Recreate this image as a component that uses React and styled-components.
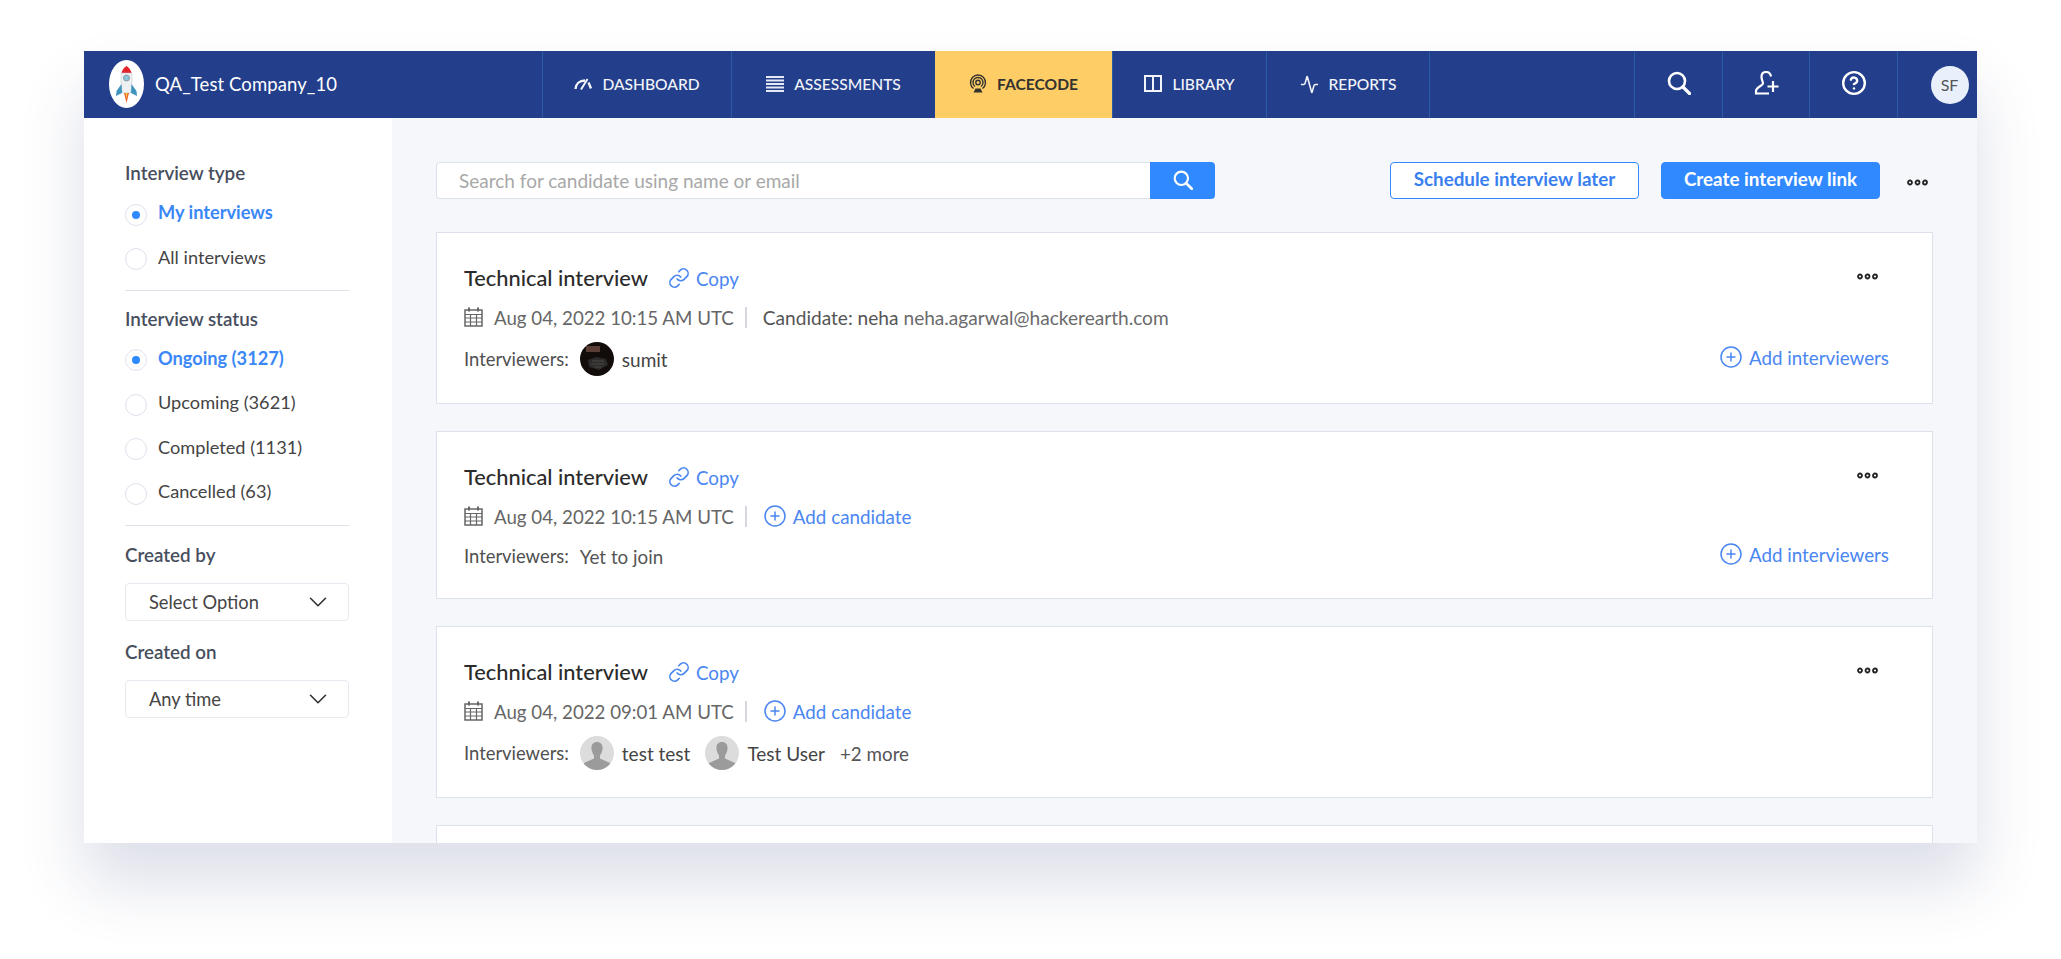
import React from "react";
import styled, { createGlobalStyle } from "styled-components";
import { Activity, ChevronDown, CircleHelp, CirclePlus, Link } from "lucide-react";

const GlobalStyle = createGlobalStyle`
  html, body {
    margin: 0;
    padding: 0;
    height: 959px;
    background: #fff;
    overflow: hidden;
    font-family: "Lato", "Liberation Sans", sans-serif;
  }
  * {
    box-sizing: border-box;
  }
`;

const Page = styled.div`
  padding: 51px 84px 0;
`;

const Frame = styled.div`
  width: 1893px;
  height: 792px;
  display: flex;
  flex-direction: column;
  overflow: hidden;
  box-shadow: 0 40px 60px rgba(50, 60, 120, 0.165);
`;

const Nav = styled.header`
  height: 67px;
  flex: none;
  display: flex;
  background: #233e8b;
  color: #fff;
`;

const Brand = styled.div`
  width: 458px;
  display: flex;
  align-items: center;
  gap: 11px;
  padding: 0 0 1px 25px;
  font-size: 18.5px;
  letter-spacing: 0.1px;
`;

const NavItem = styled.div`
  width: ${(p) => p.$width}px;
  display: flex;
  align-items: center;
  justify-content: center;
  gap: 10px;
  padding-bottom: 1px;
  border-left: ${(p) => (p.$active ? "none" : "1px solid #2a5ba6")};
  background: ${(p) => (p.$active ? "#ffcd66" : "transparent")};
  color: ${(p) => (p.$active ? "#33332f" : "#f2f4fa")};
  font-size: 15.6px;
  font-weight: ${(p) => (p.$active ? 700 : 500)};
`;

const NavSpacer = styled.div`
  flex: 1;
  border-left: 1px solid #2a5ba6;
`;

const NavIcon = styled.div`
  width: ${(p) => p.$width || 87.6}px;
  display: flex;
  align-items: center;
  justify-content: center;
  padding-bottom: 3px;
  border-left: 1px solid #2a5ba6;
`;

const Initials = styled.div`
  width: 38px;
  height: 38px;
  margin-left: 24px;
  margin-top: 3px;
  border-radius: 50%;
  background: #eaf0fb;
  color: #555;
  font-size: 16px;
  display: flex;
  align-items: center;
  justify-content: center;
`;

const Body = styled.div`
  flex: 1;
  min-height: 0;
  display: flex;
`;

const Sidebar = styled.aside`
  width: 308px;
  flex: none;
  background: #fff;
  padding: 43px 43px 0 41px;
`;

const Label = styled.div`
  height: 24px;
  line-height: 24px;
  font-size: 18.8px;
  font-weight: 600;
  color: #474e5d;
  margin-bottom: 16px;
`;

const RadioList = styled.div`
  display: flex;
  flex-direction: column;
  gap: 20.6px;
`;

const RadioRow = styled.div`
  height: 24px;
  padding-bottom: 2px;
  display: flex;
  align-items: center;
  gap: 11px;
  font-size: 18.2px;
  font-weight: ${(p) => (p.$checked ? 700 : 400)};
  color: ${(p) => (p.$checked ? "#3a87f7" : "#444")};
`;

const Radio = styled.span`
  width: 22px;
  height: 22px;
  margin-top: 5px;
  border-radius: 50%;
  border: 1px solid #dfe2ec;
  display: flex;
  align-items: center;
  justify-content: center;
  &::after {
    content: "";
    display: ${(p) => (p.$checked ? "block" : "none")};
    width: 8px;
    height: 8px;
    border-radius: 50%;
    background: #2f88ff;
  }
`;

const Divider = styled.div`
  height: 1px;
  background: #dfe2ea;
  margin: ${(p) => p.$above || 20}px 0 ${(p) => p.$below || 16}px;
`;

const Select = styled.div`
  height: 38px;
  border: 1px solid #e8e9f0;
  border-radius: 4px;
  padding: 0 15px 0 23px;
  margin-bottom: 19px;
  display: flex;
  align-items: center;
  justify-content: space-between;
  font-size: 18.3px;
  color: #444;
`;

const Main = styled.main`
  flex: 1;
  min-width: 0;
  background: #f6f7fb;
  padding: 44px 44px 0;
  overflow: hidden;
`;

const Toolbar = styled.div`
  height: 37px;
  display: flex;
  align-items: stretch;
  margin-bottom: 33px;
`;

const SearchInput = styled.input`
  width: 714px;
  padding: 0 22px;
  border: 1px solid #dde1ec;
  border-right: none;
  border-radius: 4px 0 0 4px;
  background: #fff;
  outline: none;
  font-family: inherit;
  font-size: 19px;
  &::placeholder {
    color: #a8a8a8;
    opacity: 1;
  }
`;

const SearchButton = styled.button`
  width: 65px;
  padding: 0 0 2px;
  border: none;
  border-radius: 0 4px 4px 0;
  background: #3089ff;
  display: flex;
  align-items: center;
  justify-content: center;
`;

const Button = styled.button`
  width: ${(p) => p.$width}px;
  margin-left: ${(p) => p.$left}px;
  padding: 0 0 4px;
  border: 1px solid #3089ff;
  border-radius: 4px;
  background: ${(p) => (p.$primary ? "#3089ff" : "#fff")};
  color: ${(p) => (p.$primary ? "#fff" : "#3a7ff0")};
  font-family: inherit;
  font-size: 18.8px;
  font-weight: 700;
`;

const ToolbarDots = styled.div`
  margin-left: 27px;
  padding-top: 17px;
`;

const CardList = styled.div`
  display: flex;
  flex-direction: column;
  gap: 27px;
`;

const Card = styled.article`
  flex: none;
  min-height: 60px;
  background: #fff;
  border: 1px solid #dde1ec;
  padding: 28px 43px 27px 27px;
`;

const Row = styled.div`
  height: ${(p) => p.$height || 34}px;
  margin-top: ${(p) => p.$top || 0}px;
  display: flex;
  align-items: center;
  font-size: 18.8px;
  color: #555;
`;

const Title = styled.h3`
  margin: 0 20px 0 0;
  padding-bottom: 2px;
  font-size: 21.8px;
  font-weight: 500;
  color: #2b2b2b;
`;

const ActionLink = styled.a`
  display: inline-flex;
  align-items: center;
  gap: ${(p) => p.$gap || 6}px;
  color: #4a86f2;
  font-size: 18.8px;
`;

const CardDots = styled.div`
  margin-left: auto;
  margin-right: 11px;
  padding-bottom: 4px;
`;

const DateText = styled.span`
  margin-left: 11px;
  padding-top: 1px;
  font-size: 18.7px;
  color: #666;
`;

const Separator = styled.span`
  width: 2px;
  height: 21px;
  margin: 0 16px 0 11px;
  background: #d5d8de;
`;

const Candidate = styled.span`
  padding-top: 1px;
  font-size: 19.1px;
  color: #555;
`;

const Email = styled.span`
  margin-left: 5px;
  color: #6b6b6b;
`;

const InterviewerLabel = styled.span`
  color: #4f4f4f;
  font-size: 18.4px;
  margin-right: 11px;
`;

const Person = styled.span`
  display: inline-flex;
  align-items: center;
  gap: 8px;
  margin-right: 15px;
  font-size: 19px;
  color: #444;
`;

const RightLink = styled.div`
  margin-left: auto;
`;

const Rocket = () => (
  <svg width="35" height="48" viewBox="0 0 35 48">
    <ellipse cx="17.5" cy="24" rx="17.5" ry="24" fill="#fff" />
    <path d="M17.5 6c-3 2-4.500 4.500-5 7h10c-.500-2.500-2-5-5-7z" fill="#e5232b" />
    <path d="M12.500 13c-1 6-.500 14 1 20h8c1.500-6 2-14 1-20z" fill="#eef1f4" stroke="#b9c2c9" strokeWidth=".5" />
    <circle cx="17.500" cy="18" r="3" fill="#8cc6dc" stroke="#8a99a3" />
    <path d="M12.500 24l-5 7-.500 5 6-3zM22.500 24l5 7 .500 5-6-3z" fill="#3f95bd" />
    <path d="M15 33h5l-2.500 10z" fill="#e8622a" />
    <path d="M16.500 33h2l-1 6z" fill="#f7c53f" />
  </svg>
);

const Gauge = () => (
  <svg width="18" height="12" viewBox="0 0 18 12" fill="none" stroke="#f2f4fa" strokeWidth="2.400">
    <path d="M1.500 11C1.800 6 5.500 2.500 11 2.500" />
    <path d="M7 11.500L13.500 1" strokeWidth="2" />
    <path d="M14.500 4.500L17 10.500" />
  </svg>
);

const Bars = () => (
  <svg width="18" height="16" viewBox="0 0 18 16" fill="#e6e9f4">
    <rect y="0" width="18" height="2" />
    <rect y="3.500" width="18" height="2" />
    <rect y="7" width="18" height="2" />
    <rect y="10.500" width="18" height="2" />
    <rect y="14" width="18" height="2" />
  </svg>
);

const FacecodeIcon = () => (
  <svg width="18" height="20" viewBox="0 0 18 20" fill="none" stroke="#33332f" strokeWidth="1.400">
    <path d="M4.500 14.500a7.500 7.500 0 1 1 9 0" />
    <path d="M6 12.500a5 5 0 1 1 6 0" />
    <circle cx="9" cy="8.500" r="2.200" />
    <path d="M6.500 14.500h5l2 4h-9z" fill="#33332f" stroke="none" />
  </svg>
);

const Book = () => (
  <svg width="18" height="18" viewBox="0 0 18 18" fill="none" stroke="#f2f4fa" strokeWidth="2">
    <path d="M1 1h16v15h-16z" />
    <path d="M9 1v16" />
  </svg>
);

const SearchIcon = ({ size }) => (
  <svg width={size} height={size} viewBox="0 0 24 24" fill="none" stroke="#fff" strokeWidth="2.600" strokeLinecap="round">
    <circle cx="10" cy="10" r="8" />
    <path d="M16 16l6.500 6.500" strokeWidth="3.200" />
  </svg>
);

const AddUser = () => (
  <svg width="25" height="24" viewBox="0 0 25 24" fill="none" stroke="#fff" strokeWidth="2.200">
    <path d="M17 5.500C16.500 2.500 14.500 1 12 1 9 1 7.500 3 7.500 6c0 3 1.500 4.500 1.500 6.500S2 16 2 20v2.500h13" />
    <path d="M19 10v11M13.500 15.500h11" />
  </svg>
);

const Dots = () => (
  <svg width="21" height="7" viewBox="0 0 21 7" fill="none" stroke="#222" strokeWidth="1.800" style={{ display: "block" }}>
    <circle cx="3" cy="3.500" r="2" />
    <circle cx="10.500" cy="3.500" r="2" />
    <circle cx="18" cy="3.500" r="2" />
  </svg>
);

const Calendar = () => (
  <svg width="19" height="20" viewBox="0 0 19 20" fill="none" stroke="#666" strokeWidth="1.500">
    <rect x="1" y="3" width="17" height="16" />
    <path d="M1 7.500h17M1 11h17M1 15h17M6.500 7.500V19M12.500 7.500V19" strokeWidth="1.200" />
    <path d="M5 .500v4M14 .500v4" strokeWidth="2" />
  </svg>
);

const DarkAvatar = () => (
  <svg width="34" height="34" viewBox="0 0 34 34">
    <defs>
      <clipPath id="avatar-clip">
        <circle cx="17" cy="17" r="17" />
      </clipPath>
    </defs>
    <g clipPath="url(#avatar-clip)">
      <rect width="34" height="34" fill="#120c0a" />
      <rect x="6" y="4" width="14" height="6" fill="#5b3d38" />
      <path d="M8 18l8-3 10 2 2 6-9 5-10-3z" fill="#2c2a2a" />
      <path d="M12 19h12M11 22h13M14 25h7" stroke="#4a4a48" strokeWidth="1" />
    </g>
  </svg>
);

const PersonAvatar = () => (
  <svg width="34" height="34" viewBox="0 0 34 34">
    <defs>
      <clipPath id="person-clip">
        <circle cx="17" cy="17" r="17" />
      </clipPath>
    </defs>
    <g clipPath="url(#person-clip)">
      <rect width="34" height="34" fill="#dcdcdc" />
      <path d="M17 6c-4 0-6 3-5.500 7 .300 3 1.500 5 2.500 6.500v3L4 27v7h26v-7l-10-4.500v-3c1-1.500 2.200-3.500 2.500-6.500C23 9 21 6 17 6z" fill="#9b9b9b" />
    </g>
  </svg>
);

const filters = {
  type: [
    { name: "My interviews", checked: true },
    { name: "All interviews" },
  ],
  status: [
    { name: "Ongoing (3127)", checked: true },
    { name: "Upcoming (3621)" },
    { name: "Completed (1131)" },
    { name: "Cancelled (63)" },
  ],
};

const navItems = [
  { name: "DASHBOARD", width: 189, icon: <Gauge /> },
  { name: "ASSESSMENTS", width: 204, icon: <Bars /> },
  { name: "FACECODE", width: 177, icon: <FacecodeIcon />, active: true },
  { name: "LIBRARY", width: 154, icon: <Book /> },
  { name: "REPORTS", width: 163, icon: <Activity size={19} strokeWidth={2} color="#f2f4fa" /> },
];

const Radios = ({ items }) => (
  <RadioList>
    {items.map((item) => (
      <RadioRow key={item.name} $checked={item.checked}>
        <Radio $checked={item.checked} />
        {item.name}
      </RadioRow>
    ))}
  </RadioList>
);

const AddLink = ({ children }) => (
  <ActionLink>
    <CirclePlus size={24} strokeWidth={1.5} />
    {children}
  </ActionLink>
);

const InterviewCard = ({ date, candidate, rowHeight, children, addInterviewers }) => (
  <Card>
    <Row>
      <Title>Technical interview</Title>
      <ActionLink>
        <Link size={22} strokeWidth={1.8} />
        Copy
      </ActionLink>
      <CardDots>
        <Dots />
      </CardDots>
    </Row>
    <Row $top={5}>
      <Calendar />
      <DateText>{date}</DateText>
      <Separator />
      {candidate}
    </Row>
    <Row $top={8} $height={rowHeight}>
      <InterviewerLabel>Interviewers:</InterviewerLabel>
      {children}
      {addInterviewers && (
        <RightLink>
          <AddLink>Add interviewers</AddLink>
        </RightLink>
      )}
    </Row>
  </Card>
);

export default function App() {
  return (
    <Page>
      <GlobalStyle />
      <Frame>
        <Nav>
          <Brand>
            <Rocket />
            QA_Test Company_10
          </Brand>
          {navItems.map((item) => (
            <NavItem key={item.name} $width={item.width} $active={item.active}>
              {item.icon}
              {item.name}
            </NavItem>
          ))}
          <NavSpacer />
          <NavIcon>
            <SearchIcon size={24} />
          </NavIcon>
          <NavIcon>
            <AddUser />
          </NavIcon>
          <NavIcon>
            <CircleHelp size={26} strokeWidth={2.2} color="#fff" />
          </NavIcon>
          <NavIcon $width={80}>
            <Initials>SF</Initials>
          </NavIcon>
        </Nav>
        <Body>
          <Sidebar>
            <Label>Interview type</Label>
            <Radios items={filters.type} />
            <Divider />
            <Label>Interview status</Label>
            <Radios items={filters.status} />
            <Divider $above={21} $below={17} />
            <Label>Created by</Label>
            <Select>
              Select Option
              <ChevronDown size={30} strokeWidth={1.3} color="#333" />
            </Select>
            <Label>Created on</Label>
            <Select>
              Any time
              <ChevronDown size={30} strokeWidth={1.3} color="#333" />
            </Select>
          </Sidebar>
          <Main>
            <Toolbar>
              <SearchInput placeholder="Search for candidate using name or email" readOnly />
              <SearchButton>
                <SearchIcon size={20} />
              </SearchButton>
              <Button $width={249} $left={175}>Schedule interview later</Button>
              <Button $width={219} $left={22} $primary>Create interview link</Button>
              <ToolbarDots>
                <Dots />
              </ToolbarDots>
            </Toolbar>
            <CardList>
              <InterviewCard
                date="Aug 04, 2022 10:15 AM UTC"
                addInterviewers
                candidate={
                  <Candidate>
                    Candidate: neha<Email>neha.agarwal@hackerearth.com</Email>
                  </Candidate>
                }
              >
                <Person>
                  <DarkAvatar />
                  sumit
                </Person>
              </InterviewCard>
              <InterviewCard
                date="Aug 04, 2022 10:15 AM UTC"
                rowHeight={30}
                addInterviewers
                candidate={<AddLink>Add candidate</AddLink>}
              >
                Yet to join
              </InterviewCard>
              <InterviewCard
                date="Aug 04, 2022 09:01 AM UTC"
                candidate={<AddLink>Add candidate</AddLink>}
              >
                <Person>
                  <PersonAvatar />
                  test test
                </Person>
                <Person>
                  <PersonAvatar />
                  Test User
                </Person>
                <span>+2 more</span>
              </InterviewCard>
              <Card />
            </CardList>
          </Main>
        </Body>
      </Frame>
    </Page>
  );
}
